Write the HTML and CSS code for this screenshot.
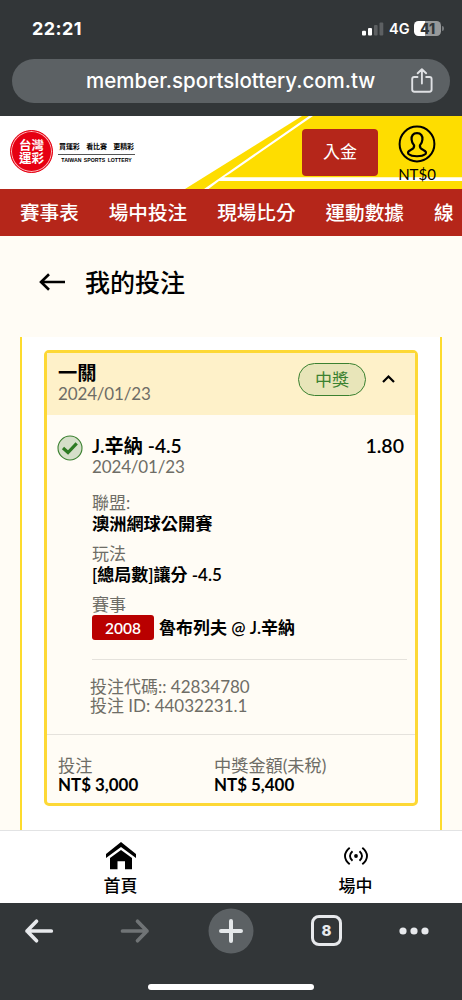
FILE: index.html
```
<!DOCTYPE html>
<html lang="zh-Hant">
<head>
<meta charset="utf-8">
<title>我的投注</title>
<link rel="stylesheet" href="styles.css">
</head>
<body>
<div class="phone">
  <div class="browser-top">
    <div class="status">
      <span class="clock">22:21</span>
      <div class="status-right">
        <svg class="signal" width="22" height="14" viewBox="0 0 22 14"><rect x="0" y="8.7" width="4" height="4.7" rx="1" fill="#fff"/><rect x="6" y="6" width="4" height="7.4" rx="1" fill="#fff"/><rect x="12" y="3" width="3.6" height="10.4" rx="1" fill="#5d6062"/><rect x="17.5" y="0.5" width="3.8" height="12.9" rx="1" fill="#5d6062"/></svg>
        <span class="network">4G</span>
        <div class="battery"><span>41</span></div>
      </div>
    </div>
    <div class="url-bar">
      <span class="url">member.sportslottery.com.tw</span>
      <svg class="share" width="22" height="26" viewBox="0 0 22 26" fill="none" stroke="#dfe1e4" stroke-width="1.9" stroke-linecap="round" stroke-linejoin="round"><path d="M6.500 9H3.200Q1.200 9 1.200 11V21.500Q1.200 23.700 3.400 23.700H18.400Q20.600 23.700 20.600 21.500V11Q20.600 9 18.600 9H15.200M10.900 15.500V1.600M6.700 5.300L10.900 1.200L15.100 5.300"/></svg>
    </div>
  </div>

  <header class="site-header">
    <svg class="stripes" width="462" height="73" viewBox="0 0 462 73"><path d="M302 0L185 73H462V0Z" fill="#fedd00"/><path d="M309 0L204 73H208.500L219 65H462V61.300H224L230 57.500L313 0Z" fill="#fff"/></svg>
    <div class="brand">
      <div class="seal"><span>台灣</span><span>運彩</span></div>
      <div class="slogan"><div class="slogan-zh"><span>買運彩</span><span>看比賽</span><span>更精彩</span></div><div class="slogan-en">TAIWAN SPORTS LOTTERY</div></div>
    </div>
    <div class="deposit">入金</div>
    <div class="account">
      <svg width="38" height="38" viewBox="0 0 38 38" fill="none" stroke="#000"><circle cx="19" cy="19" r="17.400" stroke-width="2"/><path d="M19 8.200C15 8.200 13.200 11 13.600 14.600C13.800 17 14.500 18.900 16.100 20.300C16.500 23.600 14.800 24 12.300 25.200C10 26.300 9.500 27.700 10.500 29C14 32 24 32 27.500 29C28.500 27.700 28 26.300 25.700 25.200C23.200 24 21.500 23.600 21.900 20.300C23.500 18.900 24.200 17 24.400 14.600C24.800 11 23 8.200 19 8.200Z" stroke-width="2.200" stroke-linejoin="round"/></svg>
      <span>NT$0</span>
    </div>
  </header>

  <nav class="site-nav"><span>賽事表</span><span>場中投注</span><span>現場比分</span><span>運動數據</span><span>線</span></nav>

  <main>
    <div class="page-title">
      <svg width="27" height="18" viewBox="0 0 27 18" fill="none" stroke="#000" stroke-width="2.600"><path d="M26 9H2M10 1.200L2 9L10 16.800"/></svg>
      <h1>我的投注</h1>
    </div>
    <div class="panel">
      <article class="card">
        <div class="card-head">
          <div class="card-title"><strong>一關</strong><span class="date">2024/01/23</span></div>
          <span class="won">中獎</span>
          <svg class="chevron" width="14" height="10" viewBox="0 0 14 10" fill="none" stroke="#000" stroke-width="2.200"><path d="M2 8L7.500 2.500L13 8"/></svg>
        </div>
        <div class="card-body">
          <svg class="check" width="26" height="26" viewBox="0 0 26 26"><circle cx="13" cy="13" r="12" fill="#d5dfc9" stroke="#3b8130" stroke-width="1.100"/><path d="M6 13L11 17.500L19.700 8.300" fill="none" stroke="#2d7a23" stroke-width="3.200"/></svg>
          <div class="bet">
            <div class="bet-top"><strong>J.辛納 -4.5</strong><strong class="odds">1.80</strong></div>
            <div class="date">2024/01/23</div>
            <dl>
              <div><dt>聯盟:</dt><dd class="league">澳洲網球公開賽</dd></div>
              <div><dt>玩法</dt><dd>[總局數]讓分 -4.5</dd></div>
              <div><dt>賽事</dt><dd class="match"><span class="code">2008</span><span>魯布列夫 @ J.辛納</span></dd></div>
            </dl>
            <div class="ids"><div class="bet-code">投注代碼:: 42834780</div><div class="bet-id">投注 ID: 44032231.1</div></div>
          </div>
        </div>
        <div class="totals">
          <div><span>投注</span><strong>NT$ 3,000</strong></div>
          <div><span>中獎金額(未稅)</span><strong>NT$ 5,400</strong></div>
        </div>
      </article>
    </div>
  </main>

  <div class="tabs">
    <div class="tab">
      <svg width="32" height="28" viewBox="0 0 32 28"><path d="M1 12L16 0L31 12V16L16 5L1 16Z"/><path d="M5 16L16 8L27 16V27.300H20V19.300H12.500V27.300H5Z"/></svg>
      <span>首頁</span>
    </div>
    <div class="tab">
      <svg width="24" height="28" viewBox="0 0 24 28" fill="none" stroke="#000" stroke-width="1.900"><path d="M5.700 5.700Q1 9.500 1 14Q1 18.500 5.700 22.300M18.300 5.700Q23 9.500 23 14Q23 18.500 18.300 22.300M8.500 9.300Q6 11.500 6 14Q6 16.500 8.500 18.700M15.500 9.300Q18 11.500 18 14Q18 16.500 15.500 18.700"/><circle cx="12" cy="14" r="1.900" fill="#000" stroke="none"/></svg>
      <span>場中</span>
    </div>
  </div>

  <div class="browser-bottom">
    <div class="tools">
      <svg width="30" height="28" viewBox="0 0 30 28" fill="none" stroke="#e7e9ec" stroke-width="3.700" stroke-linecap="round" stroke-linejoin="round"><path d="M27.300 14H3M12.500 4.300L3 14L12.500 23.700"/></svg>
      <svg class="forward" width="30" height="28" viewBox="0 0 30 28" fill="none" stroke="#707476" stroke-width="3.700" stroke-linecap="round" stroke-linejoin="round"><path d="M2.500 14H27M17.500 4.300L27 14L17.500 23.700"/></svg>
      <svg class="plus" width="46" height="46" viewBox="0 0 46 46"><circle cx="23" cy="23" r="22.500" fill="#5c6164"/><path d="M23 13V33M13 23H33" stroke="#e4e7e9" stroke-width="4" stroke-linecap="round"/></svg>
      <div class="tab-count">8</div>
      <svg class="more" width="30" height="8" viewBox="0 0 30 8" fill="#e7e9ec"><circle cx="4" cy="4" r="3.600"/><circle cx="15" cy="4" r="3.600"/><circle cx="26" cy="4" r="3.600"/></svg>
    </div>
    <div class="home-indicator"></div>
  </div>
</div>
</body>
</html>
```
FILE: styles.css
```
* { box-sizing: border-box; }
body { margin: 0; background: #323638; }
svg { display: block; flex: none; }
.phone {
  width: 462px; height: 1000px; overflow: hidden;
  display: flex; flex-direction: column;
  background: #fffcf5; color: #000;
  font-family: Lato, "Noto Sans CJK TC", sans-serif;
  font-size: 17px; white-space: nowrap;
}
.browser-top, .browser-bottom { background: #323638; color: #fff; font-family: Inter, sans-serif; flex: none; }
.browser-top { height: 116px; padding: 0 12px; }
.status { height: 59px; display: flex; justify-content: space-between; padding: 18px 6px 0 20px; }
.clock { font-size: 18px; font-weight: 700; line-height: 21px; letter-spacing: .4px; }
.status-right { display: flex; align-items: center; height: 21px; }
.signal { margin-right: 5px; }
.network { font-size: 14.500px; font-weight: 600; width: 20px; margin-right: 5px; }
.battery { width: 27px; height: 15px; border-radius: 4.500px; background: linear-gradient(90deg, #fff 42%, #97999a 42%); color: #323638; font-size: 14px; line-height: 15px; font-weight: 800; text-align: center; position: relative; margin-right: 3px; }
.battery::after { content: ""; position: absolute; left: 28px; top: 5px; width: 2px; height: 5px; border-radius: 0 2px 2px 0; background: #777a7c; }
.url-bar { height: 44px; border-radius: 22px; background: #5c6164; display: flex; align-items: center; justify-content: space-between; padding: 0 17px 0 74px; }
.url { font-size: 20.500px; font-weight: 500; line-height: 44px; }

.site-header { height: 73px; flex: none; background: #fff; position: relative; display: flex; padding: 0 26px 0 10px; }
.stripes { position: absolute; left: 0; top: 0; }
.brand, .deposit, .account { position: relative; }
.brand { display: flex; flex: 1; padding-top: 14px; }
.seal { width: 43px; height: 43px; border-radius: 50%; background: #e60012; border: 1px solid #e60012; box-shadow: inset 0 0 0 1px #ffb9bc; color: #fff; font-weight: 700; font-size: 12.500px; line-height: 13px; display: flex; flex-direction: column; align-items: center; justify-content: center; }
.slogan { width: 77px; margin: 10px 0 0 5px; }
.slogan-zh { display: flex; justify-content: space-between; font-size: 7px; font-weight: 700; line-height: 12px; height: 15px; padding: 0 1px; border-bottom: 1px solid #555; letter-spacing: -.1px; }
.slogan-en { font: 700 5.200px/10px "Liberation Sans", sans-serif; text-align: center; word-spacing: 1px; }
.deposit { width: 76px; height: 47px; margin-top: 13px; border-radius: 4px; background: #b5261a; color: #fff; line-height: 46px; text-align: center; }
.account { width: 38px; margin: -1px 0 0 20px; padding-top: 10px; display: flex; flex-direction: column; align-items: center; }
.account span { font-size: 15px; line-height: 20px; margin-top: 1px; }

.site-nav { height: 47px; flex: none; background: #b5261a; color: #fff; display: flex; gap: 30px; padding-left: 20px; font-size: 19.600px; font-weight: 500; line-height: 47px; }

main { height: 594px; flex: none; padding: 0 20px; overflow: hidden; }
.page-title { height: 101px; display: flex; align-items: center; gap: 19px; padding: 0 0 9px 19px; }
h1 { margin: 0; font-size: 25px; font-weight: 500; line-height: 36px; }
.panel { height: 493px; background: #fff; border: solid #fddb2d; border-width: 0 2px; padding: 13px 22px 0; }
.card { height: 456px; border: 3px solid #fdd835; border-radius: 5px; background: #fffcf5; display: flex; flex-direction: column; }
.card-head { height: 62px; background: #fef1c9; display: flex; padding: 10px 20px 0 11px; }
.card-title { flex: 1; }
.card-title strong { display: block; font-size: 19.300px; line-height: 20px; height: 20px; }
.date { color: #6e6d66; display: block; line-height: 21px; height: 20px; letter-spacing: -.15px; }
.won { width: 68px; height: 33px; border: 1px solid #3b8130; border-radius: 17px; background: #e8e5b9; color: #3b8130; text-align: center; line-height: 32px; }
.chevron { margin: 11px 0 0 15px; }
.card-body { flex: 1; display: flex; padding: 20px 8px 0 10px; }
.check { margin-right: 9px; }
.bet { flex: 1; }
.bet-top { display: flex; justify-content: space-between; height: 21px; line-height: 21px; font-size: 19.200px; padding-right: 3px; }
.odds { font-size: 19.500px; }
strong, dd { font-weight: 600; }
dl { margin: 17px 0 0; display: flex; flex-direction: column; gap: 10px; }
dt { color: #6e6d66; line-height: 20px; height: 20px; }
dd { margin: 0; line-height: 21px; height: 21px; }
.league { font-size: 17.200px; }
.match { display: flex; gap: 5px; line-height: 25px; height: 25px; }
.code { width: 62px; height: 25px; border-radius: 3px; background: #b90000; color: #fff; text-align: center; font-size: 15.500px; line-height: 26px; }
.ids { margin-top: 19px; padding-top: 17px; border-top: 1px solid #e5e2dc; color: #6e6d66; line-height: 19px; font-size: 17px; }
.bet-code, .bet-id { height: 19px; margin-left: -2px; }
.totals { height: 69px; border-top: 1px solid #e5e2dc; display: flex; padding: 21px 0 0 11px; }
.totals > div { width: 156px; display: flex; flex-direction: column; }
.totals span { color: #6e6d66; line-height: 19px; height: 19px; font-size: 17.200px; }
.totals strong { font-weight: 700; font-size: 16.900px; line-height: 19px; }

.tabs { height: 73px; flex: none; background: #fff; border-top: 1px solid #e2e3e4; display: flex; padding: 11px 0 0 3px; }
.tab { width: 235px; flex: none; display: flex; flex-direction: column; align-items: center; }
.tab span { margin-top: 5px; font-size: 17px; font-weight: 500; line-height: 22px; }
.browser-bottom { height: 97px; }
.tools { height: 55px; display: flex; align-items: center; padding-left: 24px; }
.forward { margin-left: 66px; }
.plus { margin-left: 58px; }
.tab-count { margin-left: 57px; width: 31px; height: 31px; border: 3px solid #e7e9ec; border-radius: 8px; text-align: center; font-size: 15px; line-height: 25px; font-weight: 800; color: #e7e9ec; }
.more { margin-left: 57px; }
.home-indicator { width: 166px; height: 6px; border-radius: 3px; background: #fff; margin: 26px auto 0; }
```
